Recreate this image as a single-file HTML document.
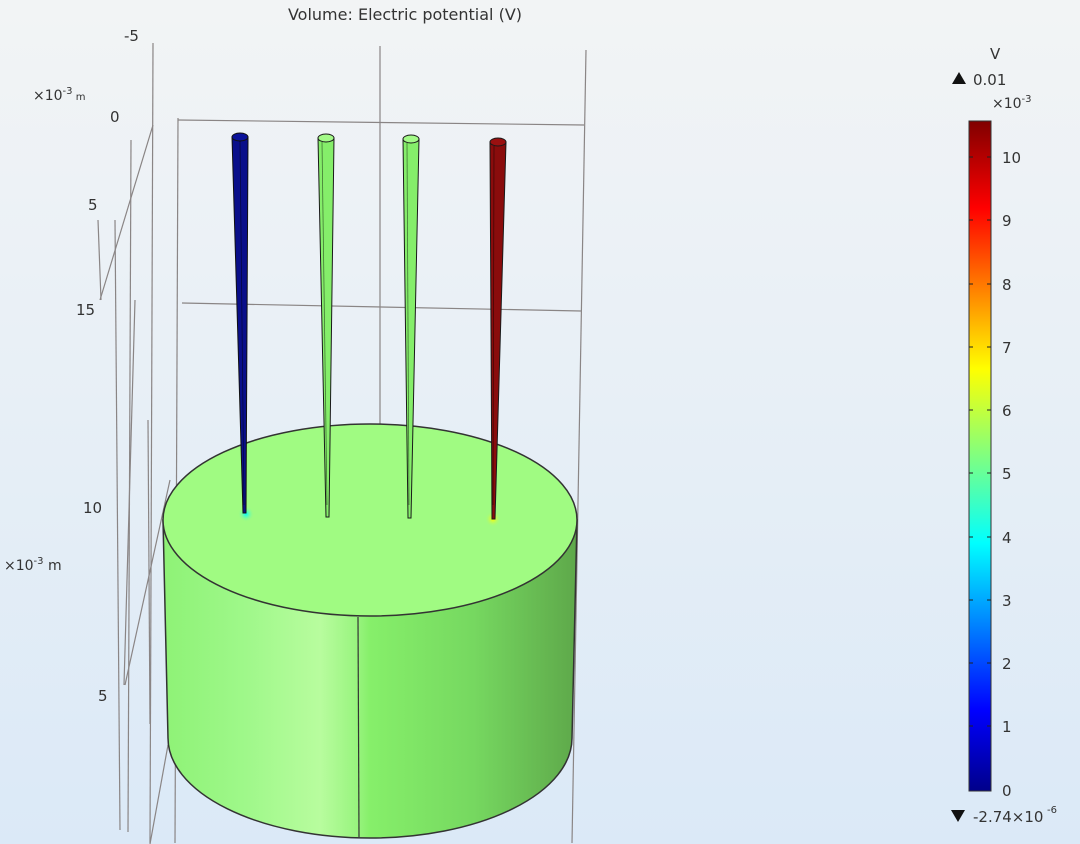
<!DOCTYPE html>
<html><head><meta charset="utf-8"><style>
html,body{margin:0;padding:0;width:1080px;height:844px;overflow:hidden}
body{background:linear-gradient(#f2f4f5 0%,#e9f0f6 40%,#dbe9f7 100%);font-family:"Liberation Sans","DejaVu Sans",sans-serif}
svg{position:absolute;left:0;top:0}
text{font-family:"DejaVu Sans","Liberation Sans",sans-serif;fill:#333}
</style></head><body>
<svg width="1080" height="844" viewBox="0 0 1080 844">
<defs>
<linearGradient id="jet" x1="0" y1="1" x2="0" y2="0">
<stop offset="0" stop-color="#00008a"/>
<stop offset="0.12" stop-color="#0000ff"/>
<stop offset="0.37" stop-color="#00ffff"/>
<stop offset="0.5" stop-color="#80ff80"/>
<stop offset="0.63" stop-color="#ffff00"/>
<stop offset="0.87" stop-color="#ff0000"/>
<stop offset="1" stop-color="#800000"/>
</linearGradient>
<linearGradient id="side" x1="0" y1="0" x2="1" y2="0">
<stop offset="0" stop-color="#8ef276"/>
<stop offset="0.2" stop-color="#9ff88a"/>
<stop offset="0.38" stop-color="#b8fc9e"/>
<stop offset="0.47" stop-color="#98f47e"/>
<stop offset="0.5" stop-color="#86ef6a"/>
<stop offset="0.75" stop-color="#76d860"/>
<stop offset="1" stop-color="#5ea84a"/>
</linearGradient>
<radialGradient id="cy" cx="0.5" cy="0.5" r="0.5"><stop offset="0" stop-color="#00ffff"/><stop offset="1" stop-color="#a0fb82" stop-opacity="0"/></radialGradient>
<radialGradient id="ye" cx="0.5" cy="0.5" r="0.5"><stop offset="0" stop-color="#ffff00"/><stop offset="1" stop-color="#a0fb82" stop-opacity="0"/></radialGradient>
</defs>
<g stroke="#8a8585" stroke-width="1.2" fill="none">
<line x1="153" y1="43" x2="150" y2="843"/>
<line x1="178" y1="118" x2="175" y2="843"/>
<line x1="380" y1="46" x2="380" y2="425"/>
<line x1="586" y1="50" x2="572" y2="843"/>
<line x1="178" y1="120" x2="584" y2="125"/>
<line x1="182" y1="303" x2="581" y2="311"/>
<line x1="131" y1="140" x2="128" y2="832"/>
<line x1="115" y1="220" x2="120" y2="830"/>
<line x1="98" y1="220" x2="101" y2="300"/>
<line x1="153" y1="125" x2="100" y2="300"/>
<line x1="135" y1="300" x2="124" y2="685"/>
<line x1="170" y1="480" x2="125" y2="685"/>
<line x1="148" y1="420" x2="150" y2="724"/>
<line x1="168" y1="745" x2="150" y2="844"/>
</g>
<path d="M163,520 L168,738 A202,100 0 0 0 572,738 L577,520 Z" fill="url(#side)" stroke="#333" stroke-width="1.5"/>
<ellipse cx="370" cy="520" rx="207" ry="96" fill="#a0fb82" stroke="#333" stroke-width="1.5"/>
<line x1="358" y1="617" x2="359" y2="837" stroke="#333" stroke-width="1.2"/>
<circle cx="246" cy="514" r="8" fill="url(#cy)"/>
<circle cx="493" cy="519" r="8" fill="url(#ye)"/>
<path d="M232,137 L248,137 L246,513 L243,513 Z" fill="#0a0f8a" stroke="#111" stroke-width="1"/>
<ellipse cx="240" cy="137" rx="8" ry="4" fill="#0b1299" stroke="#111"/>
<path d="M318,138 L334,138 L329,517 L326,517 Z" fill="#85ee6a" stroke="#1a1a1a" stroke-width="1"/>
<ellipse cx="326" cy="138" rx="8" ry="4" fill="#a3fa88" stroke="#1a1a1a"/>
<path d="M403,139 L419,139 L411,518 L408,518 Z" fill="#85ee6a" stroke="#1a1a1a" stroke-width="1"/>
<ellipse cx="411" cy="139" rx="8" ry="4" fill="#a3fa88" stroke="#1a1a1a"/>
<path d="M490,142 L506,142 L495,519 L492,519 Z" fill="#8a0c0c" stroke="#1a1a1a" stroke-width="1"/>
<ellipse cx="498" cy="142" rx="8" ry="4" fill="#9a1010" stroke="#1a1a1a"/>
<line x1="240" y1="141" x2="244" y2="505" stroke="#000" stroke-width="0.8" opacity="0.5"/>
<line x1="322" y1="142" x2="327" y2="505" stroke="#000" stroke-width="0.8" opacity="0.5"/>
<line x1="407" y1="143" x2="409" y2="505" stroke="#000" stroke-width="0.8" opacity="0.5"/>
<line x1="494" y1="146" x2="493" y2="505" stroke="#000" stroke-width="0.8" opacity="0.5"/>
<text x="405" y="20" font-size="16" text-anchor="middle">Volume: Electric potential (V)</text>
<text x="124" y="41" font-size="15">-5</text>
<text x="33" y="100" font-size="14">×10<tspan font-size="10" dy="-6">-3</tspan><tspan font-size="10" dy="6"> m</tspan></text>
<text x="110" y="122" font-size="15">0</text>
<text x="88" y="210" font-size="15">5</text>
<text x="76" y="315" font-size="15">15</text>
<text x="83" y="513" font-size="15">10</text>
<text x="4" y="570" font-size="14">×10<tspan font-size="10" dy="-6">-3</tspan><tspan dy="6"> m</tspan></text>
<text x="98" y="701" font-size="15">5</text>
<rect x="969" y="121" width="22" height="670" fill="url(#jet)" stroke="#333" stroke-width="1"/>
<g stroke="#222" stroke-width="1">
<line x1="969" y1="157" x2="973" y2="157"/><line x1="987" y1="157" x2="991" y2="157"/>
<line x1="969" y1="220" x2="973" y2="220"/><line x1="987" y1="220" x2="991" y2="220"/>
<line x1="969" y1="284" x2="973" y2="284"/><line x1="987" y1="284" x2="991" y2="284"/>
<line x1="969" y1="347" x2="973" y2="347"/><line x1="987" y1="347" x2="991" y2="347"/>
<line x1="969" y1="410" x2="973" y2="410"/><line x1="987" y1="410" x2="991" y2="410"/>
<line x1="969" y1="473" x2="973" y2="473"/><line x1="987" y1="473" x2="991" y2="473"/>
<line x1="969" y1="537" x2="973" y2="537"/><line x1="987" y1="537" x2="991" y2="537"/>
<line x1="969" y1="600" x2="973" y2="600"/><line x1="987" y1="600" x2="991" y2="600"/>
<line x1="969" y1="663" x2="973" y2="663"/><line x1="987" y1="663" x2="991" y2="663"/>
<line x1="969" y1="726" x2="973" y2="726"/><line x1="987" y1="726" x2="991" y2="726"/>
</g>
<g font-size="15">
<text x="1002" y="163">10</text><text x="1002" y="226">9</text><text x="1002" y="290">8</text>
<text x="1002" y="353">7</text><text x="1002" y="416">6</text><text x="1002" y="479">5</text>
<text x="1002" y="543">4</text><text x="1002" y="606">3</text><text x="1002" y="669">2</text>
<text x="1002" y="732">1</text><text x="1002" y="796">0</text>
</g>
<text x="990" y="59" font-size="15">V</text>
<path d="M952,84 L959,72 L966,84 Z" fill="#111"/>
<text x="973" y="85" font-size="15">0.01</text>
<text x="992" y="108" font-size="14">×10<tspan font-size="10" dy="-6">-3</tspan></text>
<path d="M951,810 L958,822 L965,810 Z" fill="#111"/>
<text x="973" y="822" font-size="15">-2.74×10</text>
<text x="1047" y="813" font-size="10">-6</text>
</svg>
</body></html>
